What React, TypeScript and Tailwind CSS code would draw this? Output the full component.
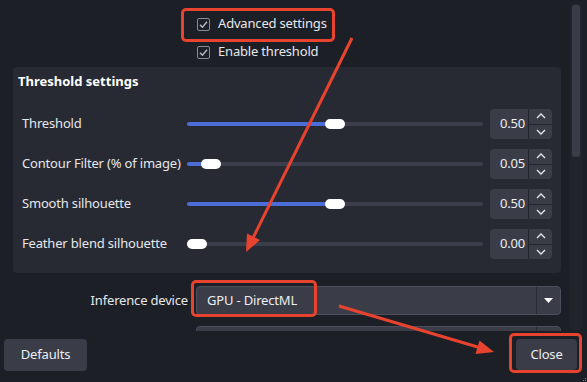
import React from "react";

const font = { fontFamily: '"Noto Sans", "Open Sans", sans-serif' };

function Check({ label }: { label: string }) {
  return (
    <div className="flex h-[28px] items-center">
      <div className="flex h-[13px] w-[13px] items-center justify-center rounded-[2px] border border-[#8a8c94]">
        <svg width="11" height="11" viewBox="0 0 11 11">
          <path d="M2 5.8 L4.4 8.2 L9 2.8" fill="none" stroke="#b8bac0" strokeWidth="1.4" />
        </svg>
      </div>
      <span className="ml-[8px] text-[13px] text-[#e6e7ea]">{label}</span>
    </div>
  );
}

function SliderRow({ label, value }: { label: string; value: number }) {
  const left = value * 276;
  return (
    <div className="flex h-[40px] items-center">
      <div className="w-[165px] text-[13px] text-[#e6e7ea] whitespace-nowrap">{label}</div>
      <div className="relative h-[10px] w-[296px]">
        <div className="absolute left-0 right-0 top-[3px] h-[4px] rounded-full bg-[#3c3f4b]" />
        <div
          className="absolute left-0 top-[3px] h-[4px] rounded-full bg-[#4c6cd8]"
          style={{ width: left + 10 }}
        />
        <div
          className="absolute top-0 h-[10px] w-[20px] rounded-full bg-white"
          style={{ left }}
        />
      </div>
      <div className="ml-[7px] flex h-[30px] w-[62px] rounded-[4px] bg-[#3a3d48]">
        <div className="flex w-[38px] items-center justify-end pr-[3px] text-[13px] text-[#eceef1]">
          {value.toFixed(2)}
        </div>
        <div className="w-[1px] bg-[#23252c]" />
        <div className="flex flex-1 flex-col">
          <div className="flex flex-1 items-center justify-center">
            <svg width="10" height="6" viewBox="0 0 10 6">
              <path d="M1 5 L5 1 L9 5" fill="none" stroke="#e6e7ea" strokeWidth="1.3" />
            </svg>
          </div>
          <div className="h-[1px] bg-[#23252c]" />
          <div className="flex flex-1 items-center justify-center">
            <svg width="10" height="6" viewBox="0 0 10 6">
              <path d="M1 1 L5 5 L9 1" fill="none" stroke="#e6e7ea" strokeWidth="1.3" />
            </svg>
          </div>
        </div>
      </div>
    </div>
  );
}

export default function App() {
  return (
    <div className="relative h-[382px] w-[587px] overflow-hidden bg-[#1d1f26] tracking-[-0.18px]" style={font}>
      <div className="flex h-[331px]">
        <div className="flex-1 overflow-hidden">
          <div className="pl-[197px] pt-[10px]">
            <Check label="Advanced settings" />
            <Check label="Enable threshold" />
          </div>
          <div className="ml-[13px] mt-[1px] w-[548px] rounded-[4px] bg-[#272a33] px-[9px] pb-[9px]">
            <div className="-ml-[4px] flex h-[30px] items-center text-[13px] font-bold tracking-normal text-white">
              Threshold settings
            </div>
            <div className="mt-[7px]">
              <SliderRow label="Threshold" value={0.5} />
              <SliderRow label="Contour Filter (% of image)" value={0.05} />
              <SliderRow label="Smooth silhouette" value={0.5} />
              <SliderRow label="Feather blend silhouette" value={0} />
            </div>
          </div>
          <div className="mt-[13px] flex h-[29px] items-center">
            <div className="w-[188px] text-right text-[13px] text-[#e6e7ea]">Inference device</div>
            <div className="ml-[8px] flex h-[29px] w-[365px] rounded-[4px] border border-[#4c4f5b] bg-[#3a3d48]">
              <div className="flex flex-1 items-center pl-[10px] text-[13px] text-[#eceef1]">
                GPU - DirectML
              </div>
              <div className="w-[1px] bg-[#2a2c34]" />
              <div className="flex w-[23px] items-center justify-center">
                <svg width="9" height="5" viewBox="0 0 9 5">
                  <path d="M0 0 L9 0 L4.5 5 Z" fill="#ffffff" />
                </svg>
              </div>
            </div>
          </div>
          <div className="ml-[196px] mt-[11px] flex h-[29px] w-[365px] rounded-t-[4px] border border-[#4c4f5b] bg-[#3a3d48]">
            <div className="flex-1" />
            <div className="w-[1px] bg-[#2a2c34]" />
            <div className="w-[23px]" />
          </div>
        </div>
        <div className="mr-[5px] mt-[3px] h-[327px] w-[12px] rounded-[4px] bg-[#22242c] px-[2px] pt-[2px]">
          <div className="h-[152px] w-[8px] rounded-[3px] bg-[#3a3d48]" />
        </div>
      </div>
      <div className="flex items-start justify-between pl-[4px] pr-[10px] pt-[8px]">
        <div className="flex h-[32px] w-[83px] items-center justify-center rounded-[4px] bg-[#3a3d48] text-[13px] text-[#eceef1]">
          Defaults
        </div>
        <div className="flex h-[31px] w-[61px] items-center justify-center rounded-[4px] bg-[#3a3d48] text-[13px] text-[#eceef1]">
          Close
        </div>
      </div>

      {/* resize grip */}
      <div className="absolute bottom-[1px] right-[1px] grid grid-cols-2 gap-[1px]">
        <div className="h-[1px] w-[1px]" />
        <div className="h-[1px] w-[1px] bg-[#8a8c94]" />
        <div className="h-[1px] w-[1px] bg-[#8a8c94]" />
        <div className="h-[1px] w-[1px] bg-[#8a8c94]" />
      </div>

      {/* annotations */}
      <div className="absolute left-[181px] top-[8px] h-[34px] w-[154px] rounded-[5px] border-[3px] border-[#e8432f]" />
      <div className="absolute left-[191px] top-[280px] h-[37px] w-[126px] rounded-[5px] border-[3px] border-[#e8432f]" />
      <div className="absolute left-[509px] top-[333px] h-[40px] w-[73px] rounded-[5px] border-[3px] border-[#e8432f]" />
      <svg className="pointer-events-none absolute left-0 top-0" width="587" height="382">
        <line x1="352" y1="38" x2="252" y2="240" stroke="#e8432f" strokeWidth="3" />
        <polygon points="246,252 247,233.5 260,240" fill="#e8432f" />
        <line x1="339" y1="306" x2="481" y2="348" stroke="#e8432f" strokeWidth="3" />
        <polygon points="494,352 475.5,354 479.5,340.5" fill="#e8432f" />
      </svg>
    </div>
  );
}
